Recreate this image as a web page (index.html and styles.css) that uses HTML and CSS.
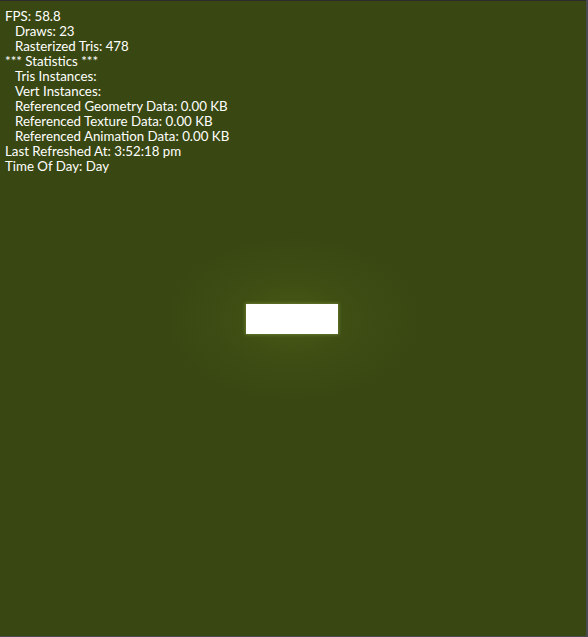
FILE: index.html
```html
<!DOCTYPE html>
<html>
<head>
<meta charset="utf-8">
<link rel="stylesheet" href="styles.css">
</head>
<body>
<div class="frame">
  <div class="stats">
    <div class="line">FPS: 58.8</div>
    <div class="line ind">Draws: 23</div>
    <div class="line ind">Rasterized Tris: 478</div>
    <div class="line">*** Statistics ***</div>
    <div class="line ind">Tris Instances:</div>
    <div class="line ind">Vert Instances:</div>
    <div class="line ind">Referenced Geometry Data: 0.00 KB</div>
    <div class="line ind">Referenced Texture Data: 0.00 KB</div>
    <div class="line ind">Referenced Animation Data: 0.00 KB</div>
    <div class="line">Last Refreshed At: 3:52:18 pm</div>
    <div class="line">Time Of Day: Day</div>
  </div>
  <div class="glow"></div>
  <div class="box"></div>
</div>
</body>
</html>
```
FILE: styles.css
```css
html, body {
  margin: 0;
  padding: 0;
  background: #4a4a50;
}
.frame {
  position: relative;
  box-sizing: border-box;
  width: 586px;
  height: 636px;
  border-top: 1px solid #2c2c2c;
  background: #394812;
  overflow: hidden;
}
.stats {
  padding: 8px 0 0 5px;
  font-family: Lato, sans-serif;
  font-size: 13.3px;
  line-height: 15px;
  color: #ffffff;
}
.line { white-space: pre; }
.ind { padding-left: 10px; }
.glow {
  position: absolute;
  left: 162px;
  top: 233px;
  width: 260px;
  height: 170px;
  border-radius: 50%;
  background: radial-gradient(ellipse at center, rgba(85,105,25,0.5) 0%, rgba(70,88,22,0.25) 40%, rgba(57,72,18,0) 70%);
}
.box {
  position: absolute;
  left: 246px;
  top: 303px;
  width: 92px;
  height: 30px;
  background: #ffffff;
  box-shadow: 0 0 3px 1px rgba(140,160,70,0.5);
}
```
